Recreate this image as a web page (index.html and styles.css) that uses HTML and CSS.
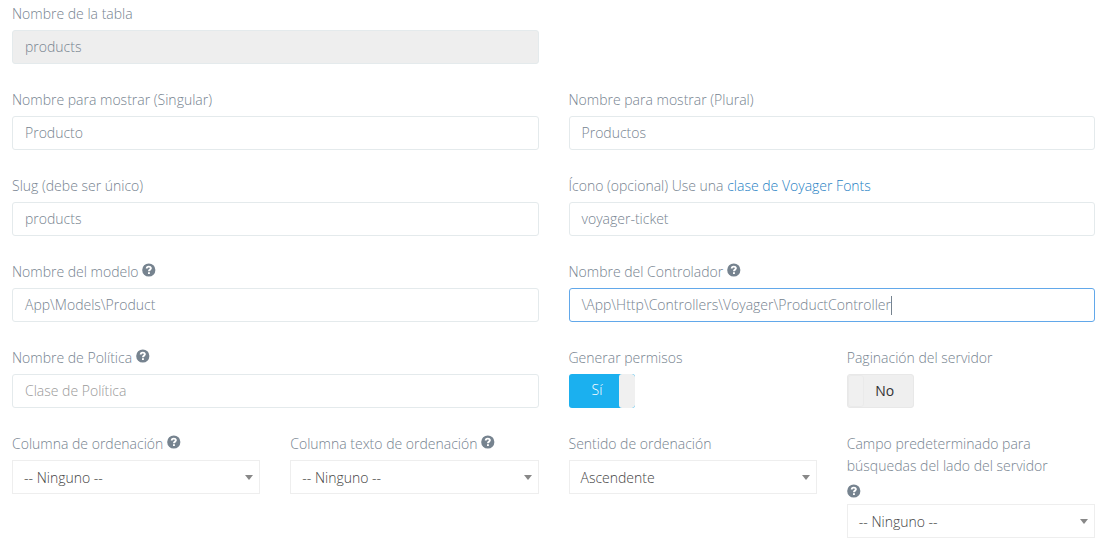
FILE: index.html
```
<!DOCTYPE html>
<html lang="es">
<head>
<meta charset="utf-8">
<title>Products</title>
<link rel="stylesheet" href="styles.css">
</head>
<body>
<svg class="defs" width="0" height="0"><symbol id="help" viewBox="0 0 14 14"><circle cx="6.8" cy="7" r="6.6" fill="currentColor"/><path d="M4.7 5.6C4.7 3 8.9 3 8.9 5.3C8.9 6.7 6.9 6.6 6.9 8.3" fill="none" stroke="#fff" stroke-width="1.9"/><rect x="6" y="9.2" width="1.9" height="1.8" fill="#fff"/></symbol></svg>
<form class="form">
<div class="field half"><label>Nombre de la tabla</label><div class="input disabled">products</div></div>
<div class="field half"></div>
<div class="field half"><label>Nombre para mostrar (Singular)</label><div class="input">Producto</div></div>
<div class="field half"><label>Nombre para mostrar (Plural)</label><div class="input">Productos</div></div>
<div class="field half"><label>Slug (debe ser único)</label><div class="input">products</div></div>
<div class="field half"><label>Ícono (opcional) Use una <a>clase de Voyager Fonts</a></label><div class="input">voyager-ticket</div></div>
<div class="field half"><label>Nombre del modelo <svg class="help"><use href="#help"/></svg></label><div class="input">App\Models\Product</div></div>
<div class="field half"><label>Nombre del Controlador <svg class="help"><use href="#help"/></svg></label><div class="input focus">\App\Http\Controllers\Voyager\ProductController<span class="caret"></span></div></div>
<div class="field half"><label>Nombre de Política <svg class="help"><use href="#help"/></svg></label><div class="input placeholder">Clase de Política</div></div>
<div class="field"><label>Generar permisos</label><div class="toggle on"><span class="state">Sí</span><span class="handle"></span></div></div>
<div class="field"><label>Paginación del servidor</label><div class="toggle off"><span class="handle"></span><span class="state">No</span></div></div>
<div class="field"><label>Columna de ordenación <svg class="help"><use href="#help"/></svg></label><div class="select">-- Ninguno --</div></div>
<div class="field"><label>Columna texto de ordenación <svg class="help"><use href="#help"/></svg></label><div class="select">-- Ninguno --</div></div>
<div class="field"><label>Sentido de ordenación</label><div class="select">Ascendente</div></div>
<div class="field"><label>Campo predeterminado para búsquedas del lado del servidor <svg class="help own-line"><use href="#help"/></svg></label><div class="select">-- Ninguno --</div></div>
</form>
</body>
</html>
```
FILE: styles.css
```
* { box-sizing: border-box; }
body { margin: 0; background: #fff; font: 300 14px/22px "Open Sans", sans-serif; color: #76838f; }
.defs { position: absolute; }
.form { display: grid; grid-template-columns: repeat(4, 248.25px); column-gap: 30px; row-gap: 25px; padding: 3px 0 0 12px; }
.half { grid-column: span 2; }
label { display: block; margin-bottom: 5px; }
a { color: #1f7fc4; }
.help { width: 14px; height: 14px; vertical-align: 0; }
.own-line { display: block; margin: 7px 0 6px; }
.input { display: flex; align-items: center; height: 34px; padding: 0 12px; border: 1px solid #e4eaec; border-radius: 3px; }
.disabled { background: #eee; }
.focus { border-color: #62a8ea; }
.placeholder { color: #999; }
.caret { width: 1px; height: 19px; background: #76838f; }
.toggle { display: flex; width: 67px; height: 34px; border-radius: 3px; overflow: hidden; line-height: 34px; text-align: center; }
.state { flex: 1; }
.handle { width: 16px; background: #f0f0f0; border-radius: 3px; }
.on { width: 66px; background: #1bb0ef; color: #fff; }
.on .state { padding-left: 7px; line-height: 32px; }
.off { background: #efefef; color: #333; border: 1px solid #e8e8e8; font-weight: 400; line-height: 32px; }
.off .handle { border: 1px solid #eaeaea; }
.off .state { padding-right: 7px; }
.select { display: flex; align-items: center; justify-content: space-between; height: 34px; padding: 2px 6px 0 11px; border: 1px solid #eee; color: #444; }
.select::after { content: ""; margin-top: -2px; border: 4px solid transparent; border-top: 5px solid #888; border-bottom: 0; }
```
